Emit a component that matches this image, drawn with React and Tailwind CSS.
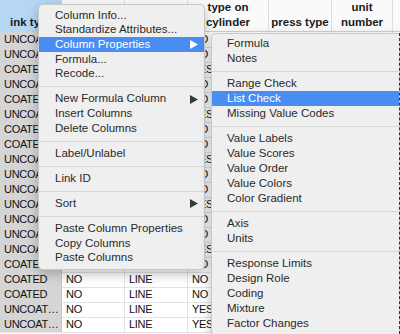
import React from 'react';

const COLS = 'grid grid-cols-[62px_63px_63px_81px_63px_61px_7px]';

// first column labels, top to bottom
const inkTypes = [
  'UNCOATED', 'UNCOATED', 'COATED', 'UNCOATED', 'COATED', 'UNCOATED', 'COATED',
  'COATED', 'UNCOATED', 'UNCOATED', 'UNCOATED', 'UNCOATED', 'UNCOATED', 'UNCOATED',
  'UNCOATED', 'COATED', 'COATED', 'COATED', 'UNCOATED', 'UNCOATED',
];
const cylinder = [
  'NO', 'NO', 'YES', 'NO', 'NO', 'YES', 'NO', 'NO', 'YES', 'NO',
  'NO', 'YES', 'NO', 'NO', 'YES', 'NO', 'NO', 'NO', 'YES', 'YES',
];

const mainMenu = [
  ['Column Info...'],
  ['Standardize Attributes...'],
  ['Column Properties', 'sub', 'active'],
  ['Formula...'],
  ['Recode...'],
  '-',
  ['New Formula Column', 'sub'],
  ['Insert Columns'],
  ['Delete Columns'],
  '-',
  ['Label/Unlabel'],
  '-',
  ['Link ID'],
  '-',
  ['Sort', 'sub'],
  '-',
  ['Paste Column Properties'],
  ['Copy Columns'],
  ['Paste Columns'],
];

const subMenu = [
  ['Formula'],
  ['Notes'],
  '-',
  ['Range Check'],
  ['List Check', null, 'active'],
  ['Missing Value Codes'],
  '-',
  ['Value Labels'],
  ['Value Scores'],
  ['Value Order'],
  ['Value Colors'],
  ['Color Gradient'],
  '-',
  ['Axis'],
  ['Units'],
  '-',
  ['Response Limits'],
  ['Design Role'],
  ['Coding'],
  ['Mixture'],
  ['Factor Changes'],
];

function MenuItems({ items, inset, itemH, sepH }) {
  return items.map((it, i) => {
    if (it === '-') {
      return (
        <div key={i} className={`${sepH} flex items-center`}>
          <div className="h-px w-full bg-[#d8d8d8]" />
        </div>
      );
    }
    const [label, sub, active] = it;
    return (
      <div
        key={i}
        className={`${itemH} flex items-center justify-between pr-[6px] ${inset} ${
          active ? 'bg-[#4a8df2] text-white' : 'text-[#2a2a2a]'
        }`}
      >
        <span className="leading-none">{label}</span>
        {sub && (
          <svg width="8" height="9" viewBox="0 0 8 9">
            <path d="M0 0 L8 4.5 L0 9 Z" fill={active ? '#ffffff' : '#3a3a3a'} />
          </svg>
        )}
      </div>
    );
  });
}

export default function App() {
  return (
    <div className="relative w-[400px] h-[334px] overflow-hidden bg-white font-['Liberation_Sans',Arial,sans-serif]">
      {/* data table */}
      <div className="flex flex-col">
        <div className={`${COLS} h-[32px] border-b border-[#d0d0d0] text-[11.5px] font-bold text-[#1a1a1a] leading-[15px]`}>
          <div className="bg-[#b6d6f6] border-r border-[#c9c9c9] flex items-end pb-[1px] pl-[10px]">
            <span className="whitespace-nowrap">ink type</span>
          </div>
          <div className="bg-[#fafafa] border-r border-[#dedede]" />
          <div className="bg-[#fafafa] border-r border-[#dedede]" />
          <div className="bg-[#fafafa] border-r border-[#dedede] flex flex-col items-center justify-end pb-[1px]">
            <span>type on</span>
            <span>cylinder</span>
          </div>
          <div className="bg-[#fafafa] border-r border-[#dedede] flex items-end justify-center pb-[1px]">
            <span>press type</span>
          </div>
          <div className="bg-[#fafafa] border-r border-[#dedede] flex flex-col items-center justify-end pb-[1px]">
            <span>unit</span>
            <span>number</span>
          </div>
          <div className="bg-[#fafafa]" />
        </div>
        {inkTypes.map((t, i) => (
          <div key={i} className={`${COLS} h-[15px] text-[11px] tracking-[-0.3px] text-[#111] leading-[15px]`}>
            <div className="bg-[#d5d5d5] border-b border-[#e9e9e9] border-r border-r-[#c4c4c4] pl-[4px] truncate">{t}</div>
            <div className="border-b border-r border-[#e2e2e2] pl-[4px]">NO</div>
            <div className="border-b border-r border-[#e2e2e2] pl-[4px]">LINE</div>
            <div className="border-b border-r border-[#e2e2e2] pl-[4px]">{cylinder[i]}</div>
            <div className="border-b border-r border-[#e2e2e2] pl-[4px]">LINE</div>
            <div className="border-b border-r border-[#e2e2e2] pl-[4px]">{i % 3}</div>
            <div className="border-b border-[#e2e2e2]" />
          </div>
        ))}
      </div>

      {/* context menu */}
      <div className="absolute left-[38px] top-[4px] w-[167px] py-[3px] rounded-[5px] bg-[#efefef] border border-[#c8c8c8] shadow-[0_4px_12px_rgba(0,0,0,0.25)] text-[11.5px] overflow-hidden">
        <MenuItems items={mainMenu} inset="pl-[16px]" itemH="h-[14.7px]" sepH="h-[10.4px]" />
      </div>

      {/* column properties submenu */}
      <div className="absolute left-[211px] top-[33px] w-[188px] pt-[2px] pb-[4px] rounded-l-[5px] bg-[#efefef] border border-[#c8c8c8] border-r-0 shadow-[0_4px_12px_rgba(0,0,0,0.25)] text-[11.5px] overflow-hidden">
        <MenuItems items={subMenu} inset="pl-[15px]" itemH="h-[15px]" sepH="h-[10px]" />
      </div>
      <div className="absolute left-[399px] top-[33px] bottom-0 w-px border-l border-dashed border-[#333]" />
    </div>
  );
}
